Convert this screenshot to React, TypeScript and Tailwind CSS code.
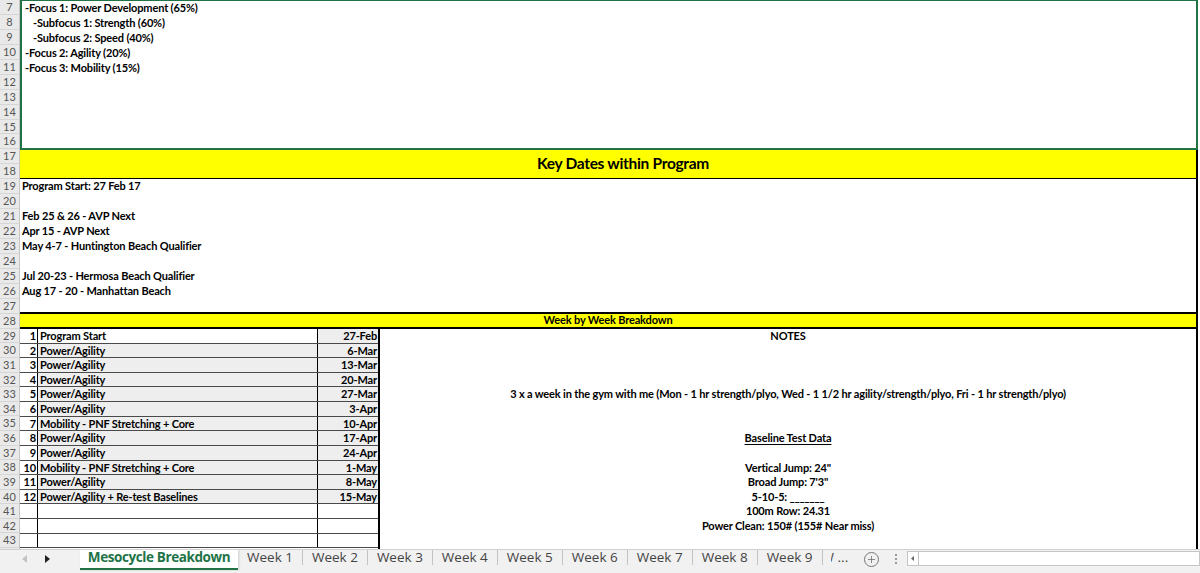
import { Plus } from "lucide-react";

// rows 7-28 are a touch taller than rows 29-43 on this sheet
const ROW = "h-[14.95px] leading-[14.95px]";
const ROW_SM = "h-[14.64px] leading-[14.64px]";

const focusLines = [
  { text: "-Focus 1: Power Development (65%)", indent: false },
  { text: "-Subfocus 1: Strength (60%)", indent: true },
  { text: "-Subfocus 2: Speed (40%)", indent: true },
  { text: "-Focus 2: Agility (20%)", indent: false },
  { text: "-Focus 3: Mobility (15%)", indent: false },
  null,
  null,
  null,
  null,
  null,
];

const keyDates = [
  "Program Start: 27 Feb 17",
  "",
  "Feb 25 & 26 - AVP Next",
  "Apr 15 - AVP Next",
  "May 4-7 - Huntington Beach Qualifier",
  "",
  "Jul 20-23 - Hermosa Beach Qualifier",
  "Aug 17 - 20 - Manhattan Beach",
  "",
];

const weeks = [
  { n: "1", label: "Program Start", date: "27-Feb" },
  { n: "2", label: "Power/Agility", date: "6-Mar" },
  { n: "3", label: "Power/Agility", date: "13-Mar" },
  { n: "4", label: "Power/Agility", date: "20-Mar" },
  { n: "5", label: "Power/Agility", date: "27-Mar" },
  { n: "6", label: "Power/Agility", date: "3-Apr" },
  { n: "7", label: "Mobility - PNF Stretching + Core", date: "10-Apr" },
  { n: "8", label: "Power/Agility", date: "17-Apr" },
  { n: "9", label: "Power/Agility", date: "24-Apr" },
  { n: "10", label: "Mobility - PNF Stretching + Core", date: "1-May" },
  { n: "11", label: "Power/Agility", date: "8-May" },
  { n: "12", label: "Power/Agility + Re-test Baselines", date: "15-May" },
  { n: "", label: "", date: "" },
  { n: "", label: "", date: "" },
  { n: "", label: "", date: "" },
];

// notes column, one entry per sheet row (29..43)
const notes: (string | null)[] = [
  "NOTES",
  null,
  null,
  null,
  "3 x a week in the gym with me (Mon - 1 hr strength/plyo, Wed - 1 1/2 hr agility/strength/plyo, Fri - 1 hr strength/plyo)",
  null,
  null,
  "Baseline Test Data",
  null,
  'Vertical Jump: 24"',
  "Broad Jump: 7'3\"",
  "5-10-5: _______",
  "100m Row: 24.31",
  "Power Clean: 150# (155# Near miss)",
  null,
];

const tabs = ["Week 1", "Week 2", "Week 3", "Week 4", "Week 5", "Week 6", "Week 7", "Week 8", "Week 9"];

const rowNumbers = Array.from({ length: 37 }, (_, i) => i + 7);

function RowHeaders() {
  return (
    <div className="w-[20px] shrink-0 flex flex-col bg-[#e9e9e9] border-r border-[#c6c6c6]">
      {rowNumbers.map((n) => (
        <div
          key={n}
          className={`${n < 29 ? ROW : ROW_SM} text-center text-[11px] text-[#555] border-b border-[#d6d6d6] font-['Lato']`}
        >
          {n}
        </div>
      ))}
    </div>
  );
}

function TabBar() {
  return (
    <div className="h-[24px] flex items-start bg-[#f1f1f1] border-t border-[#d0d0d0] font-['Open_Sans'] text-[13.5px] text-[#444] whitespace-nowrap overflow-hidden">
      <div className="w-[80px] shrink-0 h-[18px] flex items-center pl-[22px] gap-[18px]">
        <svg width="5" height="8" viewBox="0 0 5 8">
          <path d="M5 0 L0 4 L5 8 Z" fill="#c4c4c4" />
        </svg>
        <svg width="5" height="8" viewBox="0 0 5 8">
          <path d="M0 0 L5 4 L0 8 Z" fill="#222" />
        </svg>
      </div>
      <div className="w-[158px] shrink-0 h-[21px] -mt-px bg-white border-b-[2px] border-[#217346] shadow-[1px_0_2px_rgba(0,0,0,0.15)] flex items-start justify-center font-bold text-[#217346] text-[13.5px] tracking-[-0.4px]">
        <span className="leading-[17px]">Mesocycle Breakdown</span>
      </div>
      <div className="flex items-center h-[16px] -mt-px">
        {tabs.map((t) => (
          <div key={t} className="shrink-0 h-[16px] flex items-center">
            <span className="px-[9px] leading-[16px]">{t}</span>
            <span className="w-px h-[15px] bg-[#c4c4c4]" />
          </div>
        ))}
        <div className="shrink-0 w-[26px] h-[16px] ml-[8px] overflow-hidden leading-[16px]">
          <span className="inline-block -ml-[9px]">W ...</span>
        </div>
      </div>
      <div className="shrink-0 h-[18px] flex items-center ml-[7px]">
        <div className="w-[15px] h-[15px] rounded-full border border-[#777] flex items-center justify-center">
          <Plus size={11} strokeWidth={1.6} color="#666" />
        </div>
      </div>
      <div className="shrink-0 h-[18px] flex flex-col items-center justify-center gap-[2px] ml-[16px]">
        <span className="w-[2px] h-[2px] bg-[#999]" />
        <span className="w-[2px] h-[2px] bg-[#999]" />
        <span className="w-[2px] h-[2px] bg-[#999]" />
      </div>
      <div className="flex-1 h-[15px] mt-[1px] ml-[10px] flex items-stretch">
        <div className="w-[12px] bg-white border border-[#c6c6c6] flex items-center justify-center">
          <svg width="3" height="5" viewBox="0 0 3 5">
            <path d="M3 0 L0 2.5 L3 5 Z" fill="#666" />
          </svg>
        </div>
        <div className="flex-1 bg-white border border-l-0 border-[#c6c6c6]" />
      </div>
    </div>
  );
}

export default function App() {
  return (
    <div className="w-[1200px] h-[573px] overflow-hidden bg-white flex flex-col text-black">
      <div className="h-[549px] shrink-0 flex overflow-hidden">
        <RowHeaders />
        <div className="w-[1178px] flex flex-col font-['Lato'] font-bold text-[11px] tracking-[-0.15px] whitespace-nowrap">
          {/* rows 7-16: selected range */}
          <div className="h-[149.5px] shrink-0 border-2 border-t-[1.5px] border-[#217346] flex flex-col">
            {focusLines.map((l, i) => (
              <div key={i} className={`${ROW} shrink-0 ${l?.indent ? "pl-[11px]" : "pl-[3px]"}`}>
                {l?.text}
              </div>
            ))}
          </div>

          {/* rows 17-18 */}
          <div className="h-[29.9px] shrink-0 bg-[#ffff00] border-b border-r-2 border-black flex items-center justify-center pl-[30px] text-[15.5px] tracking-[-0.3px]">
            Key Dates within Program
          </div>

          {/* rows 19-27 */}
          <div className="h-[134.55px] shrink-0 border-r-2 border-b-2 border-black flex flex-col">
            {keyDates.map((d, i) => (
              <div key={i} className={`${ROW} shrink-0 pl-[2px]`}>
                {d}
              </div>
            ))}
          </div>

          {/* row 28 */}
          <div className="h-[14.95px] shrink-0 bg-[#ffff00] border-r-2 border-b-2 border-black flex items-center justify-center">
            Week by Week Breakdown
          </div>

          {/* rows 29-43 */}
          <div className="flex-1 flex">
            <div className="w-[360px] flex flex-col border-r-2 border-black">
              {weeks.map((w, i) => {
                const shade = i > 0 && i < 12;
                return (
                  <div key={i} className={`${ROW_SM} shrink-0 flex border-b border-[#4a4a4a]`}>
                    <div className="w-[18px] text-right pr-[1px] border-r border-black">{w.n}</div>
                    <div className={`w-[280px] pl-[2px] border-r border-black ${shade ? "bg-[#eeeeee]" : ""}`}>
                      {w.label}
                    </div>
                    <div className={`flex-1 text-right pr-[1px] ${i < 12 ? "bg-[#eeeeee]" : ""}`}>{w.date}</div>
                  </div>
                );
              })}
            </div>
            <div className="flex-1 flex flex-col border-r-2 border-black">
              {notes.map((t, i) => (
                <div
                  key={i}
                  className={`${ROW_SM} shrink-0 text-center ${i === 7 ? "underline underline-offset-2" : ""}`}
                >
                  {t}
                </div>
              ))}
            </div>
          </div>
        </div>
      </div>
      <TabBar />
    </div>
  );
}
